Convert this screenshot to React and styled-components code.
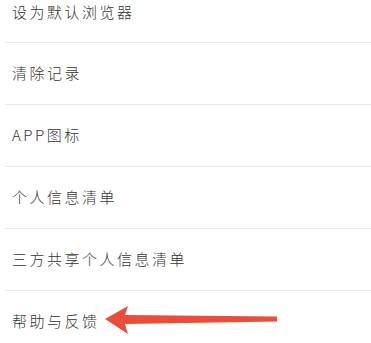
import styled, { createGlobalStyle } from 'styled-components';

const GlobalStyle = createGlobalStyle`
  html, body {
    margin: 0;
    padding: 0;
    background: #ffffff;
  }
  body {
    font-family: "Noto Sans CJK SC", "Noto Sans", sans-serif;
    overflow: hidden;
  }
`;

const Page = styled.div`
  width: 371px;
  height: 343px;
  overflow: hidden;
  background: #fff;
`;

const List = styled.ul`
  list-style: none;
  margin: 0;
  padding: 0;
`;

const Row = styled.li`
  position: relative;
  height: ${(p) => (p.$cut ? '22px' : '61px')};
  margin-left: 5px;
  padding: ${(p) => (p.$cut ? '0 0 20px 7px' : '0 0 0 7px')};
  display: flex;
  align-items: ${(p) => (p.$cut ? 'flex-end' : 'center')};
  border-bottom: ${(p) => (p.$last ? 'none' : '1px solid #e9e9e9')};
  box-sizing: content-box;
`;

const Label = styled.span`
  font-size: 15px;
  font-weight: 300;
  letter-spacing: 2.5px;
  color: #333;
  line-height: 20px;
  margin-top: -2px;
`;

const Arrow = styled.svg`
  position: absolute;
  left: 95px;
  top: 14px;
  width: 180px;
  height: 30px;
`;

const items = ['设为默认浏览器', '清除记录', 'APP图标', '个人信息清单', '三方共享个人信息清单', '帮助与反馈'];

export default function App() {
  return (
    <Page>
      <GlobalStyle />
      <List>
        {items.map((t, i) => (
          <Row key={t} $cut={i === 0} $last={i === items.length - 1}>
            <Label>{t}</Label>
            {i === items.length - 1 && (
              <Arrow viewBox="0 0 180 30">
                <path
                  d="M5 14 L28 1 L25 10 L177 11.5 L177 16.5 L25 19 L28 29 Z"
                  fill="#ea4e38"
                />
              </Arrow>
            )}
          </Row>
        ))}
      </List>
    </Page>
  );
}
